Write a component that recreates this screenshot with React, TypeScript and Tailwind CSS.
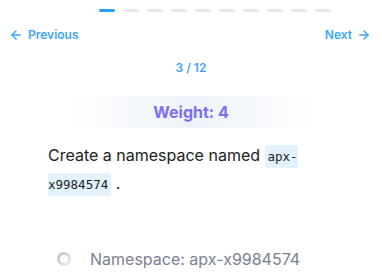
import React from "react";
import { ArrowLeft, ArrowRight } from "lucide-react";

const steps = Array.from({ length: 10 }, (_, i) => i);

export default function App() {
  const current = 0;

  return (
    <div className="w-[382px] h-[276px] overflow-hidden bg-white font-['Inter',sans-serif]">
      {/* progress */}
      <div className="flex gap-2 pl-[99px] pt-[9px]">
        {steps.map((i) => (
          <div
            key={i}
            className={
              i === current
                ? "h-[3px] w-4 rounded-full bg-[#2aa3f4]"
                : "h-[3px] w-4 rounded-full bg-[#e8e8e8]"
            }
          />
        ))}
      </div>

      {/* nav */}
      <div className="mt-[13px] flex h-5 items-center justify-between pl-[9px] pr-[11px] text-xs font-semibold text-[#3da7f6]">
        <button className="flex items-center gap-[5px]">
          <ArrowLeft size={14} strokeWidth={2.5} />
          Previous
        </button>
        <button className="flex items-center gap-[5px]">
          Next
          <ArrowRight size={14} strokeWidth={2.5} />
        </button>
      </div>

      <div className="mt-[15px] text-center text-xs font-semibold leading-4 text-[#45a2f7]">
        3 / 12
      </div>

      {/* weight */}
      <div className="mx-auto mt-5 flex h-8 w-[250px] items-center justify-center bg-gradient-to-r from-transparent via-[#eef3fa] to-transparent text-base font-bold text-[#7b6ff4]">
        Weight: 4
      </div>

      {/* question */}
      <p className="mt-[14px] px-12 text-base leading-[26px] text-[#222]">
        Create a namespace named{" "}
        <code className="rounded-[3px] bg-[#e3f2fd] px-[3px] py-1 font-['DejaVu_Sans_Mono',monospace] text-[12.5px] text-[#222]">
          apx-x9984574
        </code>
        {" ."}
      </p>

      {/* option */}
      <div className="mt-[49px] flex h-6 items-center gap-[19px] pl-[57px]">
        <span className="h-[14px] w-[14px] rounded-full bg-gradient-to-br from-[#bdbdbd] to-[#f2f2f2] p-[3px]">
          <span className="block h-full w-full rounded-full bg-white" />
        </span>
        <span className="text-base text-[#7b8190]">Namespace: apx-x9984574</span>
      </div>
    </div>
  );
}
